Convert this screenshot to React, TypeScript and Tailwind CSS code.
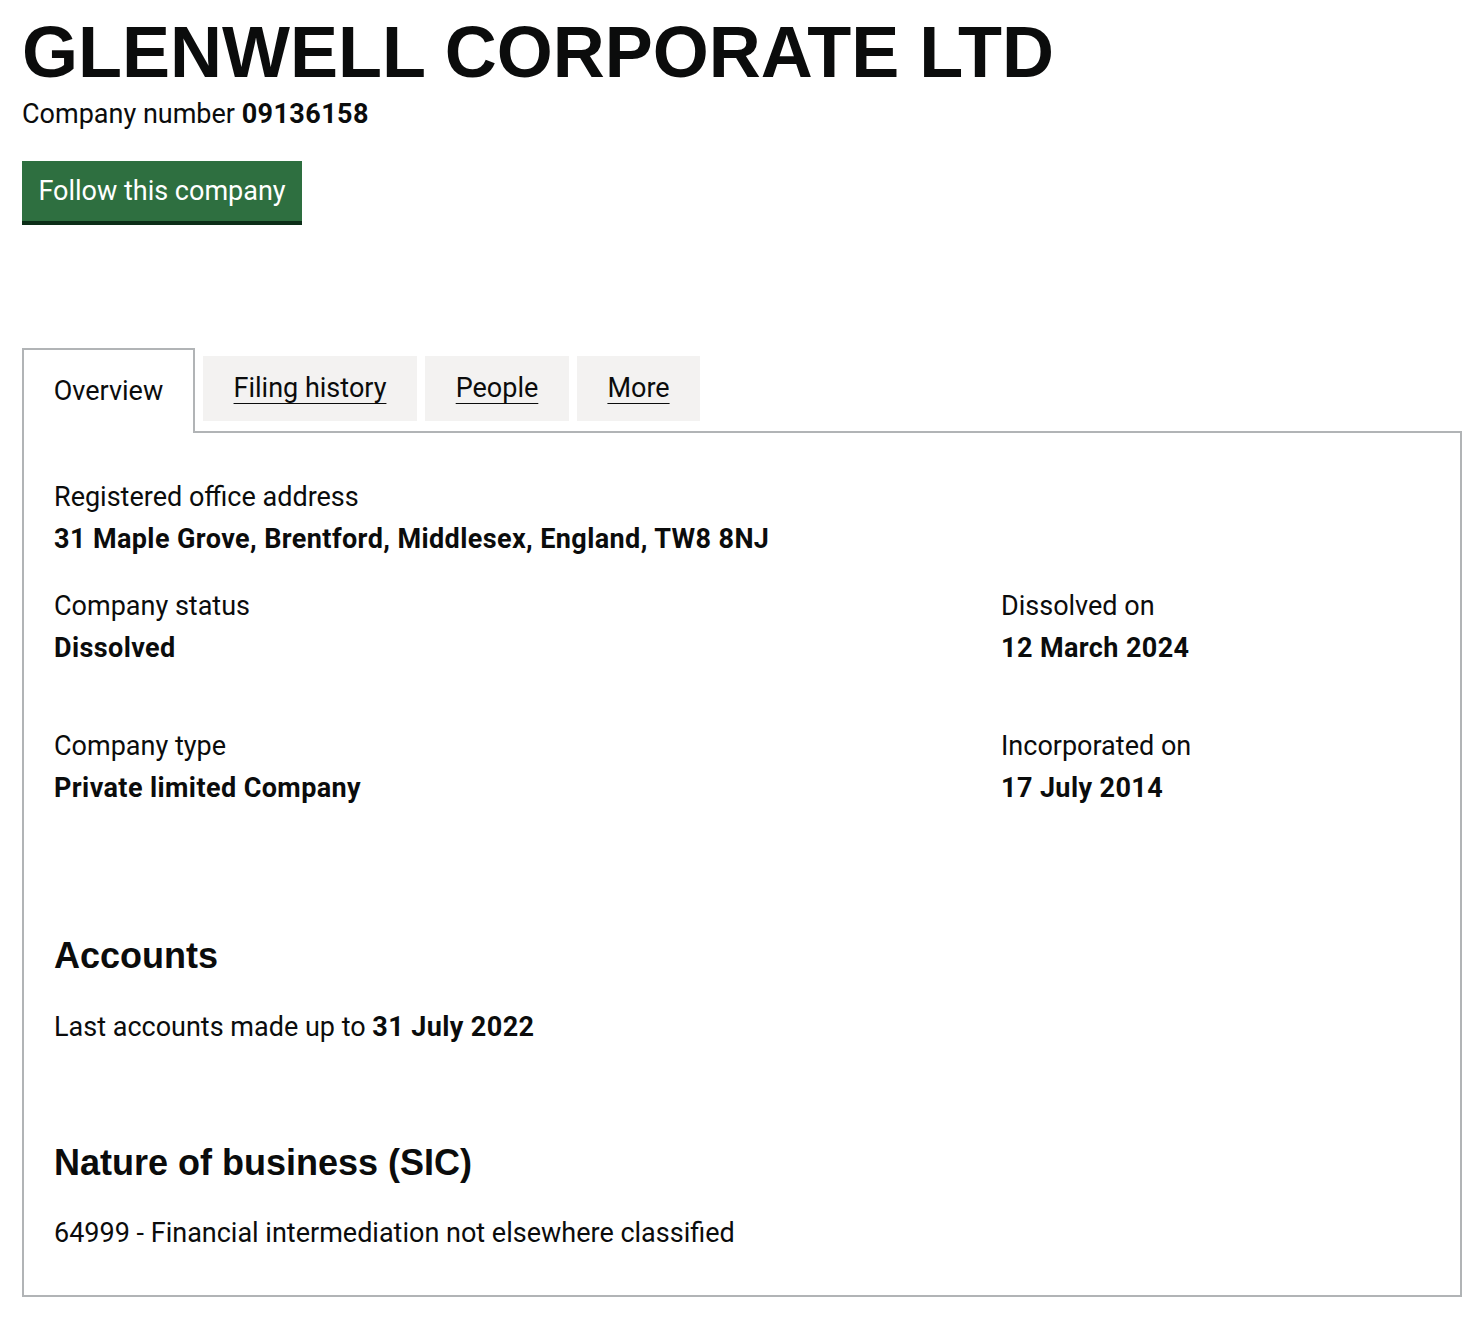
import React from 'react';

const Field: React.FC<{ label: string; value: string; className?: string }> = ({ label, value, className }) => (
  <div className={className}>
    <div className="text-[27px] leading-[30px]">{label}</div>
    <div className="mt-[12px] text-[27px] leading-[30px] font-bold tracking-[0.4px]">{value}</div>
  </div>
);

const App: React.FC = () => {
  return (
    <div className="min-h-screen bg-white px-[22px] pt-[16px] pb-[20px] text-[#0b0c0c] font-['Roboto',sans-serif]">
      <h1 className="font-['Liberation_Sans',Arial,sans-serif] text-[72px] leading-[72px] font-bold">
        GLENWELL CORPORATE LTD
      </h1>
      <p className="mt-[11px] text-[27px] leading-[30px]">
        Company number <span className="font-bold tracking-[0.4px]">09136158</span>
      </p>
      <button className="mt-[32px] h-[60px] w-[280px] bg-[#2e6f40] text-[27px] text-white shadow-[0_4px_0_#0c2e18]">
        Follow this company
      </button>

      <div className="mt-[127px]">
        <div className="flex items-start gap-[8px]">
          <div className="relative z-10 -mb-[2px] flex h-[85px] w-[173px] items-center justify-center border-2 border-b-0 border-[#b1b4b6] bg-white text-[27px]">
            Overview
          </div>
          <a href="#" className="mt-[8px] flex h-[65px] w-[214px] items-center justify-center bg-[#f3f2f1] text-[27px] underline decoration-1 underline-offset-[6px]">
            Filing history
          </a>
          <a href="#" className="mt-[8px] flex h-[65px] w-[144px] items-center justify-center bg-[#f3f2f1] text-[27px] underline decoration-1 underline-offset-[6px]">
            People
          </a>
          <a href="#" className="mt-[8px] flex h-[65px] w-[123px] items-center justify-center bg-[#f3f2f1] text-[27px] underline decoration-1 underline-offset-[6px]">
            More
          </a>
        </div>

        <div className="w-[1440px] border-2 border-[#b1b4b6] px-[30px] pt-[49px] pb-[47px]">
          <Field label="Registered office address" value="31 Maple Grove, Brentford, Middlesex, England, TW8 8NJ" />

          <div className="mt-[37px] flex">
            <Field className="w-[947px]" label="Company status" value="Dissolved" />
            <Field label="Dissolved on" value="12 March 2024" />
          </div>

          <div className="mt-[68px] flex">
            <Field className="w-[947px]" label="Company type" value="Private limited Company" />
            <Field label="Incorporated on" value="17 July 2014" />
          </div>

          <h2 className="mt-[133px] font-['Liberation_Sans',Arial,sans-serif] text-[36px] leading-[40px] font-bold">
            Accounts
          </h2>
          <p className="mt-[36px] text-[27px] leading-[30px]">
            Last accounts made up to <span className="font-bold tracking-[0.4px]">31 July 2022</span>
          </p>

          <h2 className="mt-[101px] font-['Liberation_Sans',Arial,sans-serif] text-[36px] leading-[40px] font-bold">
            Nature of business (SIC)
          </h2>
          <p className="mt-[35px] text-[27px] leading-[30px]">
            64999 - Financial intermediation not elsewhere classified
          </p>
        </div>
      </div>
    </div>
  );
};

export default App;
